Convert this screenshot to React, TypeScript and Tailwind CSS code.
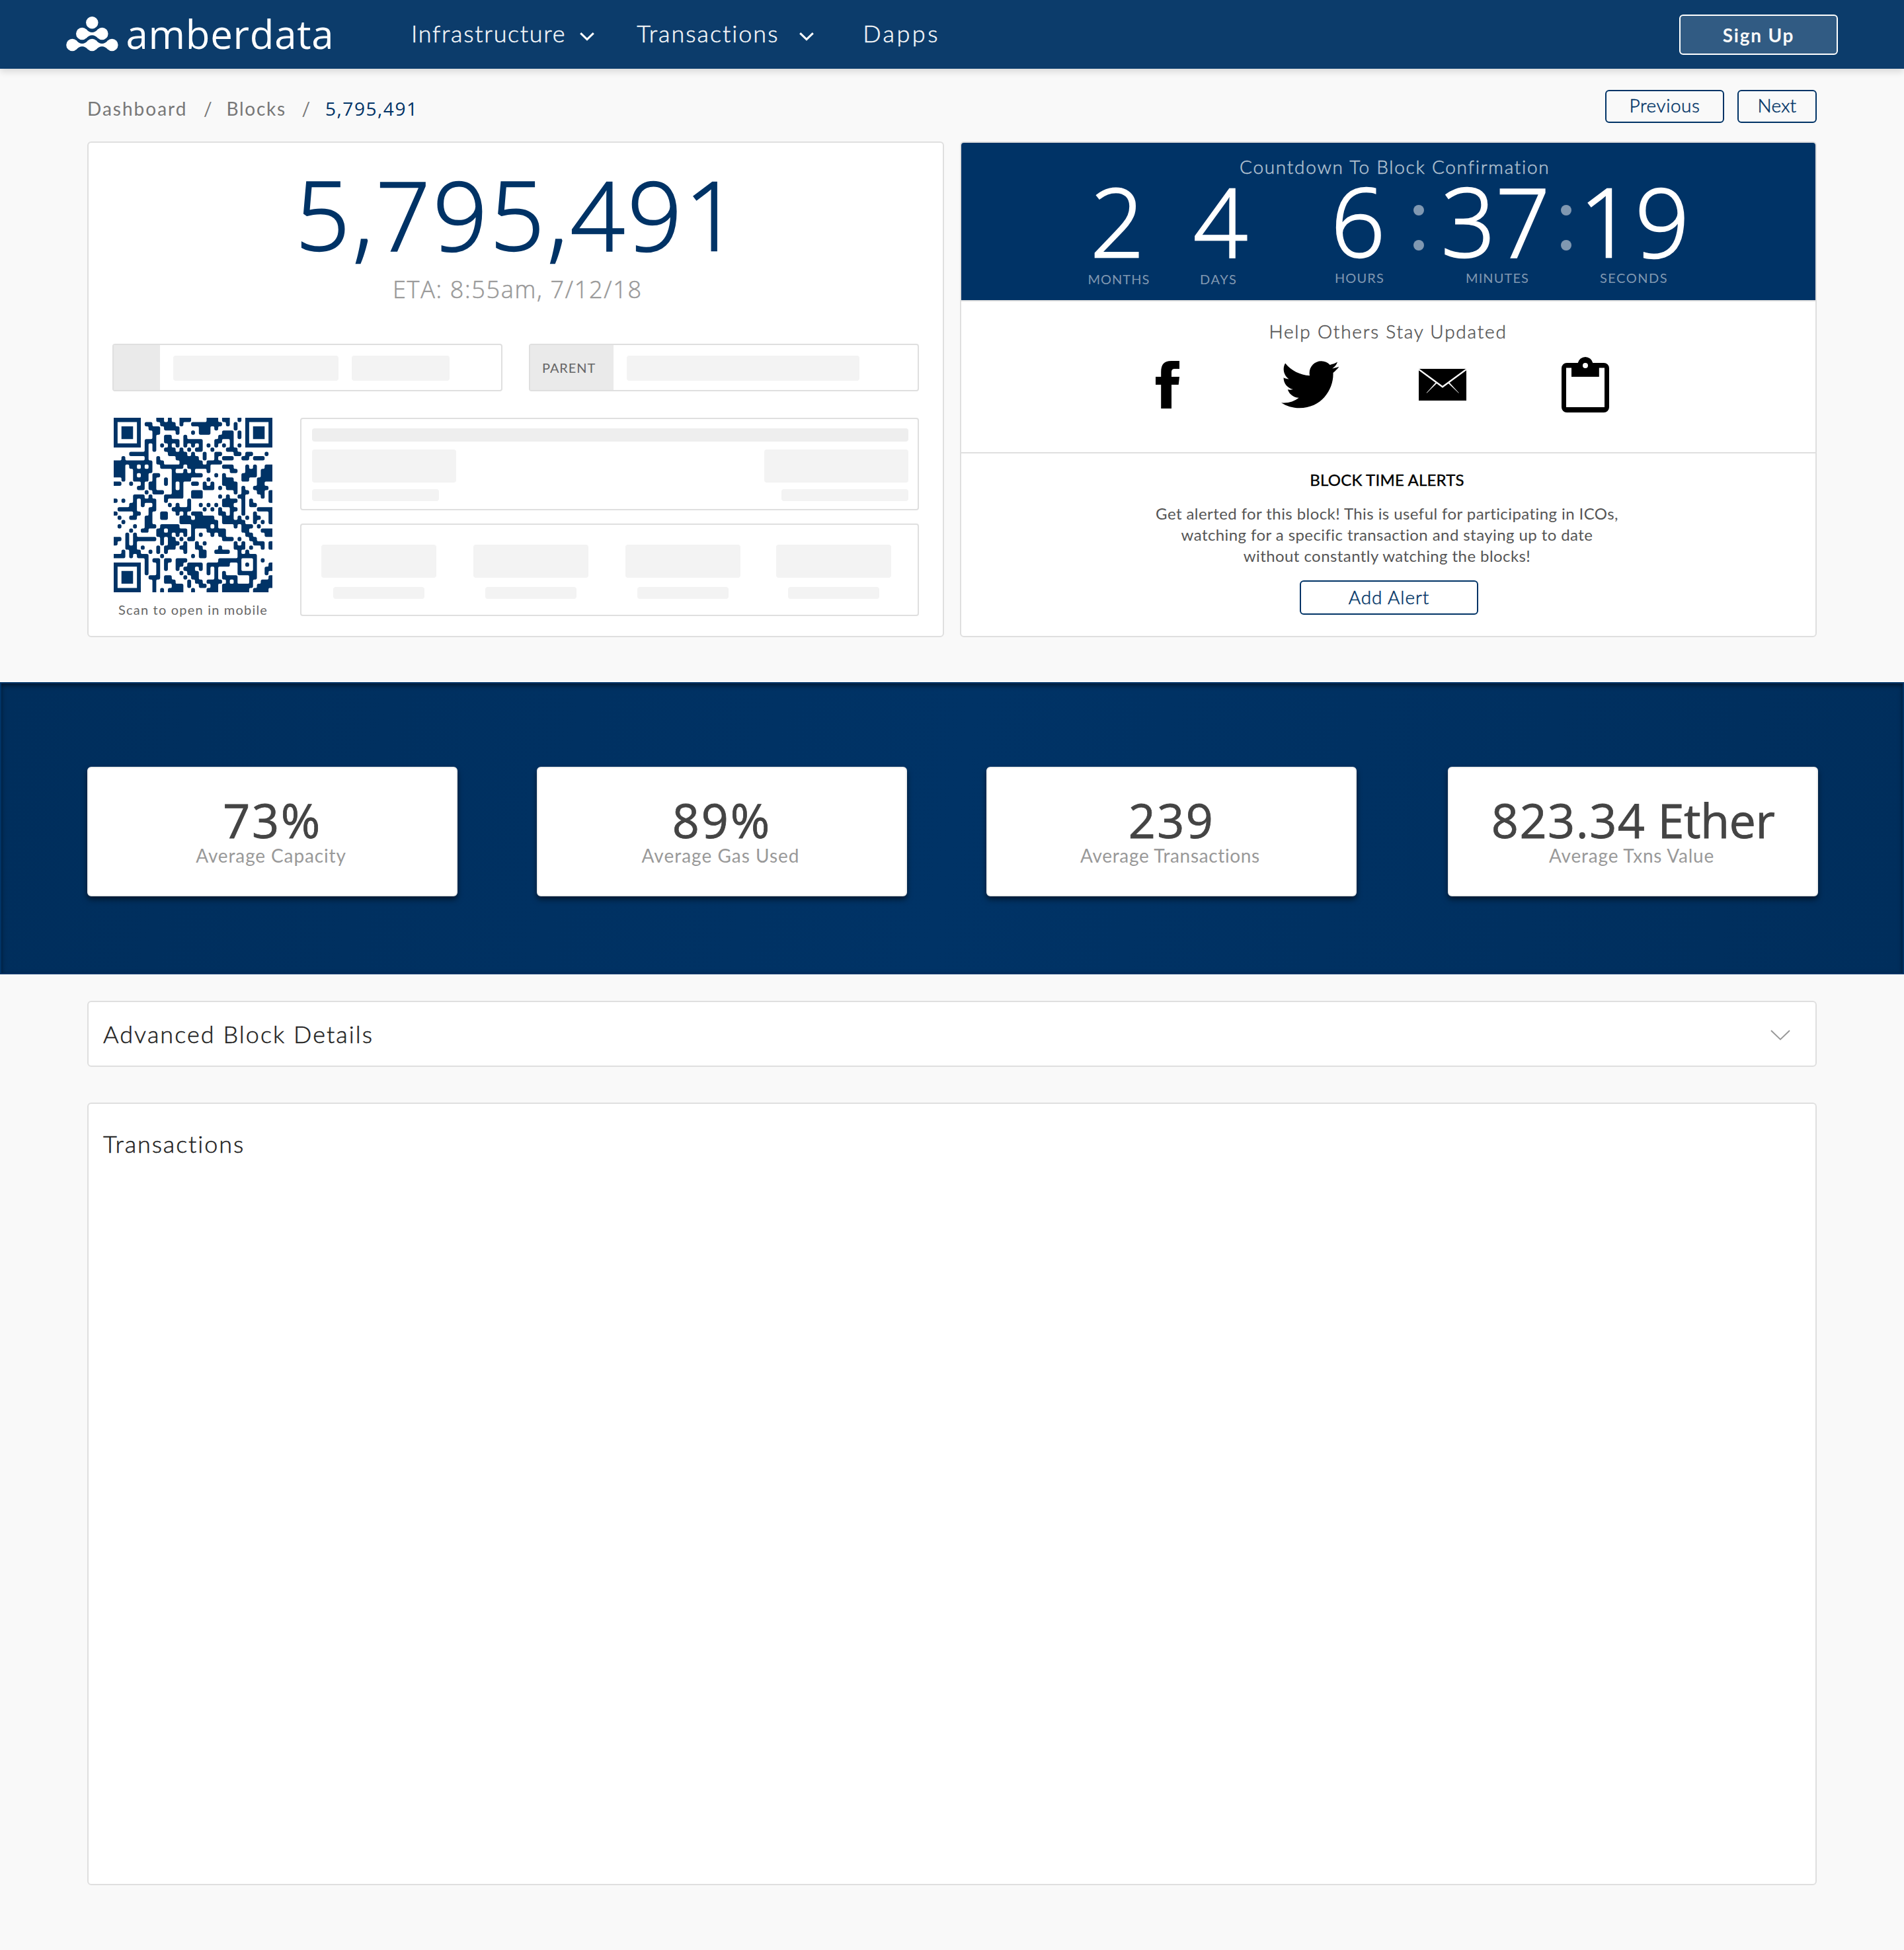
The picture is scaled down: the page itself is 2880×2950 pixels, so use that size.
import React from "react";
import { FaTwitter } from "react-icons/fa";

const LATO = "font-['Lato',sans-serif]";
const OPEN = "font-['Open_Sans',sans-serif]";
/* Light text with a hairline outline, between the light and regular weights. */
const BOOK = "font-light [-webkit-text-stroke:0.5px_currentColor]";

/* Dark modules of the QR code, one list of columns or column ranges per row. */
const QR_ROWS = [
  "0-6,11-12,14,17-19,24-26,28-29,32,34-40",
  "0,6,8-9,12-15,17,20-27,29,31,34,40",
  "0,2-4,6,9-11,13-16,22-24,26,31,34,36-38,40",
  "0,2-4,6,10-11,16,20,22-24,28-30,32,34,36-38,40",
  "0,2-4,6,10,13-14,18,27-30,32,34,36-38,40",
  "0,6,8-10,13-16,18-22,26-27,30,34,40",
  "0-6,8,10,12,14,16,18,20,22,24,26,28,30,32,34-40",
  "8,10,13-15,17,19,21-22,25,29-31",
  "4-8,14-18,20,23,26-27,31-32,34-35,39",
  "2,8,11,16-21,23,26,28-30,33-34,36-38",
  "0-9,11-12,17-22,24-27",
  "0-2,4-5,7,9,12-17,19-24,28-30,34,36,39-40",
  "0-2,5-9,15,18,20,24,30-31,34-36,38-40",
  "0-2,5,7-8,10-11,15-22,26,28,33-36,38-40",
  "2,5-8,10,13,15-19,24,28-30,33-34,37-40",
  "0-1,4,7,9-10,13,15,17,20-21,23,25,28-31,37-38",
  "6-7,9-10,15,17,23-25,27,29-31,33,36-39",
  "8,10-12,15-17,20-22,31,33-34,37-38,40",
  "5-7,9,13-17,20-22,27,29,32-33,38,40",
  "0,2,5,7-10,13,19,28-31,33,35,40",
  "4-5,7,10,14,16,19,22,24,26,28-30,33,35-36",
  "1-5,9-10,15-19,23,25,27,30-31,33,37-40",
  "0,5-6,9,12-13,16,18,20-22,27-28,30,33,36,40",
  "1,4-5,8-9,12-13,17-19,21-25,28-30,32,34,36-37,40",
  "2,8-9,17-26,28-33,36,38,40",
  "1,5,8-10,12-16,20-24,26,31,33-35,37",
  "4,7-8,11-12,14-18,20,24-28,33-34,38-40",
  "3,5,11-14,16,18,20,22,25,27-28,34-35,39-40",
  "0-1,3,5-10,12,14-15,17,19-20,28-30,32,35-36",
  "0,3,5,12,14-16,18,21,23,31,33,36-38,40",
  "3-5,7,11,13-15,17-18,21-22,27,31-33,35,38,40",
  "2,4-6,9,11,13,18,22-23,26-29,32,34",
  "0-2,4,6-8,12,20,22-23,32-36",
  "8,10-11,13-14,16-18,27-32,36,38",
  "0-6,8,11,13,16-17,19-22,24-29,32,34,36,40",
  "0,6,8,11,13,16,18-20,22,24,26,32,36,39-40",
  "0,2-4,6,8,11,17,19-21,24,26,28,32-36,39",
  "0,2-4,6,9-11,13-14,18,20-21,26,28-31,35-36,40",
  "0,2-4,6,10,13-15,19,21-22,24-27,29,31,35,38-40",
  "0,6,10,15-17,19,22-23,25-26,28-35,37-40",
  "0-6,10,12,14-17,20,24-26,28-34,36-39",
];

const SIZE = 41;
const grid: boolean[][] = QR_ROWS.map((row) => {
  const cells = new Array<boolean>(SIZE).fill(false);
  row.split(",").forEach((part) => {
    const [from, to] = part.split("-").map(Number);
    for (let c = from; c <= (to ?? from); c++) cells[c] = true;
  });
  return cells;
});
const dark = (r: number, c: number) => Boolean(grid[r] && grid[r][c]);
const inFinder = (r: number, c: number) =>
  (r < 7 && (c < 7 || c > 33)) || (r > 33 && c < 7);

/* Modules melt into each other: free corners are rounded, inner corners are filled. */
function qrPath() {
  const k = 0.42;
  let d = "";
  for (let r = 0; r < SIZE; r++) {
    for (let c = 0; c < SIZE; c++) {
      const square = inFinder(r, c);
      const n = dark(r - 1, c);
      const s = dark(r + 1, c);
      const w = dark(r, c - 1);
      const e = dark(r, c + 1);
      if (dark(r, c)) {
        const tl = !square && !n && !w && r > 0 && c > 0 ? k : 0;
        const tr = !square && !n && !e && r > 0 && c < 40 ? k : 0;
        const br = !square && !s && !e && r < 40 && c < 40 ? k : 0;
        const bl = !square && !s && !w && r < 40 && c > 0 ? k : 0;
        d += `M${c + tl} ${r}H${c + 1 - tr}q${tr} 0 ${tr} ${tr}V${r + 1 - br}q0 ${br} ${-br} ${br}H${c + bl}q${-bl} 0 ${-bl} ${-bl}V${r + tl}q0 ${-tl} ${tl} ${-tl}z`;
      } else if (!square) {
        const j = 0.3;
        if (n && w && dark(r - 1, c - 1)) d += `M${c} ${r}h${j}q${-j} 0 ${-j} ${j}z`;
        if (n && e && dark(r - 1, c + 1)) d += `M${c + 1} ${r}v${j}q0 ${-j} ${-j} ${-j}z`;
        if (s && w && dark(r + 1, c - 1)) d += `M${c} ${r + 1}v${-j}q0 ${j} ${j} ${j}z`;
        if (s && e && dark(r + 1, c + 1)) d += `M${c + 1} ${r + 1}h${-j}q${j} 0 ${j} ${-j}z`;
      }
    }
  }
  return d;
}
const QR_PATH = qrPath();

function Logo() {
  return (
    <svg className="ml-[100px] mt-[25px] h-[53px] w-[80px] shrink-0" viewBox="100 25 80 53" fill="white">
      <circle cx="139.3" cy="34.2" r="9.2" />
      <circle cx="124.2" cy="51" r="9.2" />
      <circle cx="154.4" cy="51" r="9.2" />
      <circle cx="109.4" cy="68" r="9.2" />
      <circle cx="139.3" cy="68" r="9.2" />
      <circle cx="169.4" cy="68" r="9.2" />
      <path d="M130 44Q139.3 54 148.6 44V58Q139.3 48.5 130 58z" />
      <path d="M115 61Q124.3 71 133.6 61V75Q124.3 65.5 115 75z" />
      <path d="M145 61Q154.3 71 163.6 61V75Q154.3 65.5 145 75z" />
    </svg>
  );
}

function NavChevron() {
  return (
    <svg className="mt-[49px] h-[13px] w-[22px] shrink-0" viewBox="0 0 22 13" fill="none" stroke="white" strokeWidth="3">
      <path d="M1.2 1.2 11 10.6 20.8 1.2" />
    </svg>
  );
}

function Header() {
  return (
    <header className="relative flex h-[104px] shrink-0 items-start whitespace-nowrap bg-[#0c3c6b] text-white shadow-[0_4px_10px_rgba(0,0,0,0.14)]">
      <Logo />
      <div className={`ml-[10.5px] w-[431.5px] shrink-0 text-[60px] leading-[102px] tracking-[0.7px] ${OPEN}`}>amberdata</div>
      <div className={`w-[255.2px] shrink-0 text-[36px] leading-[100px] tracking-[1.7px] text-[#f4f6f8] ${BOOK}`}>Infrastructure</div>
      <NavChevron />
      <div className={`ml-[64px] w-[245.5px] shrink-0 text-[36px] leading-[100px] tracking-[2px] text-[#f4f6f8] ${BOOK}`}>Transactions</div>
      <NavChevron />
      <div className={`ml-[74.5px] text-[36px] leading-[100px] tracking-[3.5px] text-[#f4f6f8] ${BOOK}`}>Dapps</div>
      <button className="ml-auto mr-[100px] mt-[22px] h-[61px] w-[240px] rounded-md border-2 border-white bg-[#315b83] text-[28px] font-bold leading-none tracking-[1.8px] text-[#f8f8f8]">
        Sign Up
      </button>
    </header>
  );
}

function SubHeader() {
  const button = `h-[50px] rounded-md border-2 border-[#003366] pb-1 text-[28px] leading-none text-[#003366] ${BOOK}`;
  return (
    <div className="flex h-[110px] items-start justify-between pl-[132px] pr-[132px]">
      <nav className="mt-[45px] flex whitespace-nowrap text-[28px] leading-[30px] text-[#777777]">
        <span className="w-[176px] tracking-[2px]">Dashboard</span>
        <span className="w-[34.5px]">/</span>
        <span className="w-[114px] tracking-[1.7px]">Blocks</span>
        <span className="w-[35.5px]">/</span>
        <span className={`font-medium tracking-[1.55px] text-[#003366] ${OPEN}`}>5,795,491</span>
      </nav>
      <div className="mt-[32px] flex gap-5">
        <button className={`w-[180px] tracking-[0.55px] ${button}`}>Previous</button>
        <button className={`w-[120px] tracking-[0.25px] ${button}`}>Next</button>
      </div>
    </div>
  );
}

function Bone({ className }: { className: string }) {
  return <div className={`rounded-[4px] ${className}`} />;
}

function BlockCard() {
  return (
    <section className="h-[750px] w-[1296px] rounded-md border-2 border-[#dfdfdf] bg-white">
      <h1 className={`mt-[27px] whitespace-nowrap pl-[313px] text-[144px] font-light leading-[160px] tracking-[4.2px] text-[#003366] [-webkit-text-stroke:2.4px_#003366] ${OPEN}`}>5,795,491</h1>
      <p className={`mt-[11px] whitespace-nowrap pl-[460px] text-[36px] leading-[48px] tracking-[1.7px] text-[#999999] ${OPEN} ${BOOK}`}>ETA: 8:55am, 7/12/18</p>
      <div className="mt-[58px] flex justify-between px-9">
        <div className="flex h-[72px] w-[590px] items-start rounded-[4px] border-2 border-[#dfdfdf]">
          <div className="h-full w-[70px] bg-[#eaeaea]" />
          <Bone className="ml-5 mt-4 h-[38px] w-[250px] bg-[#f3f3f3]" />
          <Bone className="ml-5 mt-4 h-[38px] w-[148px] bg-[#f3f3f3]" />
        </div>
        <div className="flex h-[72px] w-[590px] items-start rounded-[4px] border-2 border-[#dfdfdf]">
          <div className="h-full w-[126px] bg-[#eaeaea] pl-[18px] text-[20px] leading-[69px] tracking-[0.9px] text-[#666666]">PARENT</div>
          <Bone className="ml-5 mt-4 h-[38px] w-[352px] bg-[#f3f3f3]" />
        </div>
      </div>
      <div className="mt-[40px] flex px-9">
        <div className="ml-[2px] w-[282px]">
          <svg className="h-[264px] w-[240px]" viewBox="0 0 41 41" preserveAspectRatio="none" fill="#003366">
            <path d={QR_PATH} />
          </svg>
          <p className="mt-[14px] whitespace-nowrap pl-[7px] text-[20px] leading-[24px] tracking-[1.2px] text-[#666666]">Scan to open in mobile</p>
        </div>
        <div className="flex flex-col gap-5">
          <div className="h-[140px] w-[936px] rounded-[4px] border-2 border-[#dfdfdf] pl-4 pr-[14px] pt-[14px]">
            <Bone className="h-5 w-full bg-[#eeeeee]" />
            <div className="mt-3 flex justify-between">
              <Bone className="h-[50px] w-[218px] bg-[#f3f3f3]" />
              <Bone className="h-[50px] w-[218px] bg-[#f3f3f3]" />
            </div>
            <div className="mt-[10px] flex justify-between">
              <Bone className="h-[18px] w-[192px] bg-[#f3f3f3]" />
              <Bone className="h-[18px] w-[192px] bg-[#f3f3f3]" />
            </div>
          </div>
          <div className="flex h-[140px] w-[936px] rounded-[4px] border-2 border-[#dfdfdf] pl-[30px] pt-[30px]">
            {["mr-[56px]", "mr-[56px]", "mr-[54px]", ""].map((gap, i) => (
              <div key={i} className={`flex flex-col items-center ${gap}`}>
                <Bone className="h-[50px] w-[174px] bg-[#f3f3f3]" />
                <Bone className="mt-[14px] h-[18px] w-[138px] bg-[#f3f3f3]" />
              </div>
            ))}
          </div>
        </div>
      </div>
    </section>
  );
}

const DIGITS = `text-[144px] font-light leading-[136px] [-webkit-text-stroke:2.4px_white] ${OPEN}`;
const UNIT = "text-[20px] leading-[24px] text-[#8098b1]";

function Colon() {
  return (
    <div className="flex w-4 shrink-0 flex-col gap-[37px] pt-[45px]">
      <div className="size-4 rounded-full bg-[#8098b1]" />
      <div className="size-4 rounded-full bg-[#8098b1]" />
    </div>
  );
}

function Countdown() {
  return (
    <div className="h-[240px] whitespace-nowrap rounded-t-[4px] border-b-2 border-[#dfdfdf] bg-[#003366] pt-[23px]">
      <p className={`pl-[421px] text-[28px] leading-[26px] tracking-[1.72px] text-[#b3c2d1] ${BOOK}`}>Countdown To Block Confirmation</p>
      <div className="flex pl-[186px] text-white">
        <div className="w-[160px] shrink-0">
          <div className={`pl-[9px] ${DIGITS}`}>2</div>
          <div className={`mt-[9px] pl-[5.5px] tracking-[1px] ${UNIT}`}>MONTHS</div>
        </div>
        <div className="w-[210px] shrink-0">
          <div className={`pl-[5px] ${DIGITS}`}>4</div>
          <div className={`mt-[9px] pl-[15px] tracking-[1.7px] ${UNIT}`}>DAYS</div>
        </div>
        <div className="w-[127.5px] shrink-0">
          <div className={`pl-[3px] ${DIGITS}`}>6</div>
          <div className={`mt-[7px] pl-[9px] tracking-[1.1px] ${UNIT}`}>HOURS</div>
        </div>
        <Colon />
        <div className="w-[207.5px] shrink-0">
          <div className={`pl-[26.5px] ${DIGITS}`}>37</div>
          <div className={`mt-[7px] pl-[63.5px] tracking-[1.1px] ${UNIT}`}>MINUTES</div>
        </div>
        <Colon />
        <div className="shrink-0">
          <div className={`pl-[12px] tracking-[2px] ${DIGITS}`}>19</div>
          <div className={`mt-[7px] pl-[43px] tracking-[1.5px] ${UNIT}`}>SECONDS</div>
        </div>
      </div>
    </div>
  );
}

function Share() {
  return (
    <div className="h-[230px] border-b-2 border-[#dfdfdf] pt-[29px]">
      <p className={`whitespace-nowrap pl-[465.5px] text-[28px] leading-[32px] tracking-[1.78px] text-[#555555] ${BOOK}`}>Help Others Stay Updated</p>
      <div className="mt-[23px] flex items-start pl-[294px]">
        <svg className="mt-[6px] h-[72px] w-[36px]" viewBox="0 0 36 72">
          <path d="M36 0V12H29.5C25.2 12 24 13.6 24 17.5V24H36L34.7 36H24V72H8.2V36H0V24H8.2V17C8.2 5 13 0 23.5 0z" />
        </svg>
        <FaTwitter className="-mt-[2px] ml-[153.5px] size-[87.5px]" />
        <svg className="ml-[121px] mt-[18px] h-[48px] w-[72px]" viewBox="0 0 72 48">
          <path d="M0 0H72V48H0z" />
          <path d="M0 .8 36 27.2 72 .8" fill="none" stroke="white" strokeWidth="2.4" />
          <path d="M27.5 21.4 12 36.4 26 20.4zM44.5 21.4 60.4 36.4 46 20.4z" fill="white" stroke="white" strokeWidth=".5" />
        </svg>
        <svg className="ml-[144px] h-[84px] w-[72px]" viewBox="0 0 72 84">
          <path
            fillRule="evenodd"
            d="M8 9H24.7A11.6 11.6 0 0 1 47.3 9H64A8 8 0 0 1 72 17V76A8 8 0 0 1 64 84H8A8 8 0 0 1 0 76V17A8 8 0 0 1 8 9zM7 16.6V76H65V16.6H56.8V30H15V16.6zM36 9A4 4 0 0 0 36 17A4 4 0 0 0 36 9z"
          />
        </svg>
      </div>
    </div>
  );
}

function Alerts() {
  return (
    <div className="flex flex-col items-center pt-[22.5px]">
      <h2 className="pr-1 text-[24px] font-normal leading-[34px] tracking-[0.2px] text-black [-webkit-text-stroke:0.4px_black]">BLOCK TIME ALERTS</h2>
      <p className="mt-[18px] whitespace-nowrap pr-1 text-center text-[24px] leading-[32px] tracking-[0.42px] text-[#555555]">
        Get alerted for this block! This is useful for participating in ICOs,
        <br />
        watching for a specific transaction and staying up to date
        <br />
        without constantly watching the blocks!
      </p>
      <button className={`ml-[2px] mt-[21.5px] h-[52px] w-[270px] rounded-md border-2 border-[#003366] pb-[2px] text-[28px] leading-none tracking-[0.95px] text-[#003366] ${BOOK}`}>
        Add Alert
      </button>
    </div>
  );
}

function StatCard({ value, label, className }: { value: React.ReactNode; label: React.ReactNode; className: string }) {
  return (
    <div className={`h-[196px] w-[560px] shrink-0 rounded-md border-2 border-[#eeeeee] bg-white pt-[42px] text-center shadow-[0_5px_9px_rgba(0,0,0,0.5)] ${className}`}>
      <div className={`text-[72px] leading-[72px] text-[#444444] [-webkit-text-stroke:0.8px_#444444] ${OPEN}`}>{value}</div>
      <div className="mt-[2px] pr-1 text-[28px] leading-[32px] text-[#999999]">{label}</div>
    </div>
  );
}

function Stats() {
  return (
    <section className="mt-[68px] flex h-[442px] shrink-0 border-2 border-[#003366] bg-[linear-gradient(100deg,#002e5c_0%,#003366_50%,#002e5c_100%)] pl-[130px] pt-[126px] shadow-[inset_0_3px_7px_rgba(0,0,0,0.5)]">
      <StatCard className="" value={<span className="tracking-[2.6px]">73%</span>} label={<span className="tracking-[0.87px]">Average Capacity</span>} />
      <StatCard className="ml-[120px]" value={<span className="tracking-[2.8px]">89%</span>} label={<span className="tracking-[1px]">Average Gas Used</span>} />
      <StatCard className="ml-[120px]" value={<span className="tracking-[2.4px]">239</span>} label={<span className="tracking-[0.65px]">Average Transactions</span>} />
      <StatCard
        className="ml-[138px]"
        value={
          <>
            <span className="tracking-[1.5px]">823.34</span>
            <span className="tracking-[-0.6px]"> Ether</span>
          </>
        }
        label={<span className="tracking-[0.8px]">Average Txns Value</span>}
      />
    </section>
  );
}

export default function App() {
  return (
    <div className={`flex h-[2950px] w-[2880px] flex-col bg-[#f9f9f9] ${LATO}`}>
      <Header />
      <SubHeader />
      <main className="flex gap-6 pl-[132px]">
        <BlockCard />
        <section className="h-[750px] w-[1296px] rounded-md border-2 border-[#dfdfdf] bg-white">
          <Countdown />
          <Share />
          <Alerts />
        </section>
      </main>
      <Stats />
      <section className="ml-[132px] mt-10 flex h-[100px] w-[2616px] items-center justify-between rounded-md border-2 border-[#dfdfdf] bg-white pl-[22px] pr-[38px]">
        <h2 className={`text-[36px] leading-[48px] tracking-[2.05px] text-[#222222] ${BOOK}`}>Advanced Block Details</h2>
        <svg className="mt-[4px] h-[16px] w-[30px]" viewBox="0 0 30 16" fill="none" stroke="#999999" strokeWidth="2">
          <path d="M1 1 15 14.4 29 1" />
        </svg>
      </section>
      <section className="ml-[132px] mt-[54px] h-[1184px] w-[2616px] rounded-md border-2 border-[#dfdfdf] bg-white pl-[22px] pt-[36px]">
        <h2 className={`text-[36px] leading-[48px] tracking-[1.9px] text-[#222222] ${BOOK}`}>Transactions</h2>
      </section>
    </div>
  );
}
